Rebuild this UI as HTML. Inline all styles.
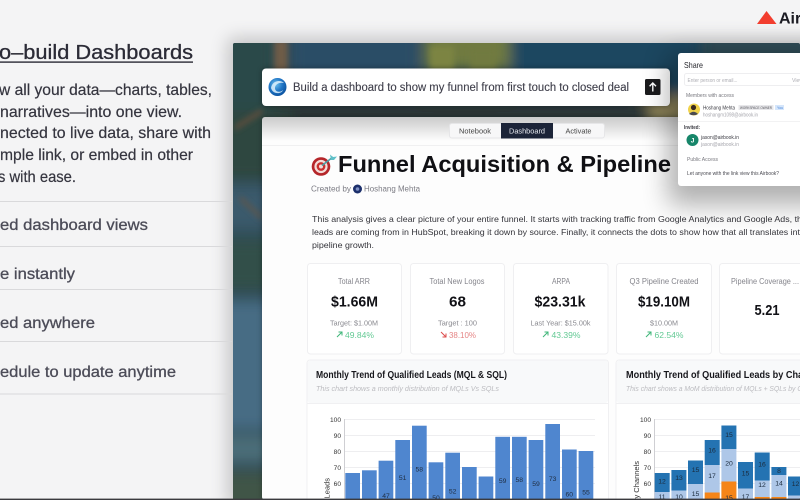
<!DOCTYPE html>
<html lang="en"><head><meta charset="utf-8"><title>Auto-build Dashboards</title>
<style>
html,body{margin:0;padding:0;width:800px;height:500px;overflow:hidden;background:#f4f4f5}
svg{display:block;filter:blur(.3px)}
text{font-family:"Liberation Sans",sans-serif;white-space:pre}
</style></head><body>
<svg width="800" height="500" viewBox="0 0 800 500" xmlns="http://www.w3.org/2000/svg">
<defs>
<filter id="b8" x="-50%" y="-50%" width="200%" height="200%"><feGaussianBlur stdDeviation="7"/></filter>
<filter id="b3" x="-50%" y="-50%" width="200%" height="200%"><feGaussianBlur stdDeviation="3"/></filter>
<filter id="sh" x="-30%" y="-30%" width="160%" height="160%"><feGaussianBlur stdDeviation="9"/></filter>
<filter id="sh3" x="-40%" y="-40%" width="180%" height="180%"><feGaussianBlur stdDeviation="13"/></filter>
<filter id="sh2" x="-30%" y="-30%" width="160%" height="160%"><feGaussianBlur stdDeviation="3"/></filter>
<clipPath id="pan"><rect x="233" y="43" width="567" height="457" rx="2"/></clipPath>
<clipPath id="card"><rect x="262" y="117" width="538" height="383" rx="3"/></clipPath>
<clipPath id="view"><rect x="0" y="0" width="800" height="500"/></clipPath>
<radialGradient id="orb" cx="40%" cy="35%" r="70%"><stop offset="0" stop-color="#6cc0ee"/><stop offset=".55" stop-color="#1f74c4"/><stop offset="1" stop-color="#0a4f9c"/></radialGradient>
<linearGradient id="topsh" x1="0" y1="0" x2="0" y2="1"><stop offset="0" stop-color="#000" stop-opacity=".2"/><stop offset="1" stop-color="#000" stop-opacity="0"/></linearGradient>
</defs>
<g clip-path="url(#view)">
<rect width="800" height="500" fill="#f4f4f5"/>
<!-- panel shadow -->
<rect x="228" y="38" width="600" height="470" fill="#000" opacity=".2" filter="url(#sh)"/>
<rect x="0" y="0" width="208" height="500" fill="#f4f4f5"/>
<rect x="0" y="0" width="800" height="16" fill="#f4f4f5"/>

<!-- left copy -->
<g fill="#2b2b36" stroke="#2b2b36" stroke-width=".3">
<text x="-1" y="59" font-size="20.5" textLength="194" lengthAdjust="spacingAndGlyphs">o–build Dashboards</text>
</g>
<rect x="0" y="61.4" width="193" height="1.4" fill="#2b2b36"/>
<g fill="#35353f" stroke="#35353f" stroke-width=".2" font-size="16">
<text x="-1" y="95" textLength="213" lengthAdjust="spacingAndGlyphs">w all your data—charts, tables,</text>
<text x="0" y="117" textLength="182" lengthAdjust="spacingAndGlyphs">narratives—into one view.</text>
<text x="0" y="138" textLength="211" lengthAdjust="spacingAndGlyphs">nected to live data, share with</text>
<text x="0" y="160" textLength="193" lengthAdjust="spacingAndGlyphs">mple link, or embed in other</text>
<text x="-2" y="182" textLength="78" lengthAdjust="spacingAndGlyphs">s with ease.</text>
</g>
<g fill="#d9d9db">
<rect x="0" y="201" width="232" height="1"/><rect x="0" y="246" width="232" height="1"/><rect x="0" y="289" width="232" height="1"/><rect x="0" y="341" width="232" height="1"/><rect x="0" y="393.5" width="232" height="1"/>
</g>
<g fill="#4c4c58" stroke="#4c4c58" stroke-width=".3" font-size="16">
<text x="0" y="230" textLength="148" lengthAdjust="spacingAndGlyphs">ed dashboard views</text>
<text x="0" y="279" textLength="75" lengthAdjust="spacingAndGlyphs">e instantly</text>
<text x="0" y="328" textLength="95" lengthAdjust="spacingAndGlyphs">ed anywhere</text>
<text x="0" y="377" textLength="176" lengthAdjust="spacingAndGlyphs">edule to update anytime</text>
</g>

<!-- logo -->
<path d="M766.5 11 L776.5 24 L757 24 Z" fill="#f23d2e"/>
<text x="779" y="23.5" font-size="16" font-weight="bold" fill="#1a1a22">Air</text>

<!-- painting -->
<g clip-path="url(#pan)">
<rect x="233" y="43" width="567" height="457" fill="#2f4b55"/>
<g filter="url(#b8)">
<rect x="200" y="20" width="75" height="105" fill="#2c4a48"/>
<rect x="290" y="20" width="130" height="75" fill="#2c4e66"/>
<rect x="425" y="20" width="90" height="50" fill="#6f7a40"/>
<rect x="510" y="20" width="190" height="75" fill="#1d4660"/>
<rect x="640" y="95" width="50" height="30" fill="#8d8358"/>
<rect x="270" y="100" width="380" height="25" fill="#2a3636"/>
<rect x="200" y="110" width="90" height="70" fill="#2e4641"/>
<rect x="200" y="185" width="90" height="45" fill="#3a5a6c"/>
<rect x="200" y="240" width="90" height="50" fill="#33504a"/>
<rect x="200" y="300" width="90" height="130" fill="#466c84"/>
<rect x="200" y="435" width="90" height="28" fill="#4b6d78"/>
<rect x="200" y="472" width="90" height="50" fill="#3f5446"/>
</g>
<g filter="url(#b3)">
<rect x="274" y="40" width="14" height="32" fill="#6e5c46"/>
<rect x="430" y="46" width="24" height="24" fill="#7c8442"/>
<rect x="470" y="48" width="26" height="22" fill="#717a40"/>
<path d="M235 125 L262 108 L262 114 L235 131Z" fill="#5b4e3e"/>
<path d="M240 195 L262 215 L262 221 L240 201Z" fill="#5a5650"/>
</g>
</g>

<!-- main card -->
<rect x="262" y="117" width="538" height="383" rx="3" fill="#000" opacity=".3" filter="url(#sh2)"/>
<g clip-path="url(#card)">
<rect x="262" y="117" width="538" height="383" fill="#fdfdfd"/>
<rect x="262" y="117" width="420" height="24" fill="url(#topsh)"/>
<rect x="262" y="145" width="538" height="1" fill="#f0f0f1"/>
<!-- tabs -->
<rect x="449.5" y="123.5" width="155" height="14.5" rx="2.5" fill="#f7f7f8" stroke="#e6e6e8"/>
<rect x="501" y="123" width="52" height="15.5" fill="#1c2438"/>
<text x="475" y="133.5" font-size="7.6" fill="#444" text-anchor="middle" textLength="32" lengthAdjust="spacingAndGlyphs">Notebook</text>
<text x="527" y="133.5" font-size="7.6" fill="#e9ebf0" text-anchor="middle" textLength="36" lengthAdjust="spacingAndGlyphs">Dashboard</text>
<text x="578.5" y="133.5" font-size="7.6" fill="#444" text-anchor="middle" textLength="26" lengthAdjust="spacingAndGlyphs">Activate</text>

<!-- target emoji -->
<circle cx="321" cy="166.5" r="9.3" fill="#b5262a"/><circle cx="321" cy="166.5" r="6.6" fill="#f3dcd8"/><circle cx="321" cy="166.5" r="4.4" fill="#c9302f"/><circle cx="321" cy="166.5" r="2" fill="#f3dcd8"/>
<path d="M322 165.5 L333 157" stroke="#4aa0a8" stroke-width="1.6"/><path d="M330 154.5 L333 157 L337 156.5 L334 160 L331 160Z" fill="#5fc0c8"/>
<text x="338" y="172" font-size="23.5" font-weight="bold" fill="#101014" textLength="333" lengthAdjust="spacingAndGlyphs">Funnel Acquisition &amp; Pipeline</text>

<text x="311" y="191.5" font-size="8" fill="#7c7c84" textLength="40" lengthAdjust="spacingAndGlyphs">Created by</text>
<circle cx="357.5" cy="189" r="4.5" fill="#1c2f6b"/><circle cx="357.5" cy="189" r="1.8" fill="#7e90c4"/>
<text x="364" y="191.5" font-size="8" fill="#7c7c84" textLength="56" lengthAdjust="spacingAndGlyphs">Hoshang Mehta</text>

<g font-size="8.6" fill="#34343a">
<text x="312" y="222" textLength="490" lengthAdjust="spacingAndGlyphs">This analysis gives a clear picture of your entire funnel. It starts with tracking traffic from Google Analytics and Google Ads, th</text>
<text x="312" y="235" textLength="488" lengthAdjust="spacingAndGlyphs">leads are coming from in HubSpot, breaking it down by source. Finally, it connects the dots to show how that all translates int</text>
<text x="312" y="248" textLength="62" lengthAdjust="spacingAndGlyphs">pipeline growth.</text>
</g>

<!-- KPI cards -->
<g fill="#fff" stroke="#efeff1">
<rect x="307.5" y="263.5" width="94" height="90.5" rx="3"/><rect x="410.5" y="263.5" width="94" height="90.5" rx="3"/><rect x="513.5" y="263.5" width="94.5" height="90.5" rx="3"/><rect x="616.5" y="263.5" width="95" height="90.5" rx="3"/><rect x="719.5" y="263.5" width="95" height="90.5" rx="3"/>
</g>
<g font-size="8" fill="#85858c" text-anchor="middle">
<text x="354" y="284" textLength="32" lengthAdjust="spacingAndGlyphs">Total ARR</text>
<text x="457" y="284" textLength="55" lengthAdjust="spacingAndGlyphs">Total New Logos</text>
<text x="561" y="284" textLength="18" lengthAdjust="spacingAndGlyphs">ARPA</text>
<text x="664" y="284" textLength="69" lengthAdjust="spacingAndGlyphs">Q3 Pipeline Created</text>
<text x="765" y="284" textLength="68" lengthAdjust="spacingAndGlyphs">Pipeline Coverage ...</text>
</g>
<g font-size="15" font-weight="bold" fill="#111116" text-anchor="middle">
<text x="354.5" y="306.5" textLength="47" lengthAdjust="spacingAndGlyphs">$1.66M</text>
<text x="457.5" y="306.5" textLength="17" lengthAdjust="spacingAndGlyphs">68</text>
<text x="560" y="306.5" textLength="51" lengthAdjust="spacingAndGlyphs">$23.31k</text>
<text x="664" y="306.5" textLength="52" lengthAdjust="spacingAndGlyphs">$19.10M</text>
<text x="767" y="315" textLength="25" lengthAdjust="spacingAndGlyphs">5.21</text>
</g>
<g font-size="7.6" fill="#8a8a90" text-anchor="middle">
<text x="354" y="325.5" textLength="48" lengthAdjust="spacingAndGlyphs">Target: $1.00M</text>
<text x="457.5" y="325.5" textLength="39" lengthAdjust="spacingAndGlyphs">Target : 100</text>
<text x="560.5" y="325.5" textLength="60" lengthAdjust="spacingAndGlyphs">Last Year: $15.00k</text>
<text x="664" y="325.5" textLength="28" lengthAdjust="spacingAndGlyphs">$10.00M</text>
</g>
<g font-size="8.5" fill="#62c993">
<text x="345" y="338" textLength="29" lengthAdjust="spacingAndGlyphs">49.84%</text>
<text x="551.5" y="338" textLength="29" lengthAdjust="spacingAndGlyphs">43.39%</text>
<text x="654.5" y="338" textLength="29" lengthAdjust="spacingAndGlyphs">62.54%</text>
</g>
<text x="449" y="338" font-size="8.5" fill="#e58585" textLength="27" lengthAdjust="spacingAndGlyphs">38.10%</text>
<g fill="none" stroke="#3fb678" stroke-width="1">
<path d="M337 337 L342 332 M338.5 332 H342 V335.5"/><path d="M543 337 L548 332 M544.5 332 H548 V335.5"/><path d="M646 337 L651 332 M647.5 332 H651 V335.5"/>
</g>
<path d="M441 332 L446 337 M446 333.5 V337 H442.5" fill="none" stroke="#dc4b4b" stroke-width="1"/>

<!-- chart cards -->
<rect x="307" y="360" width="301.5" height="150" rx="3" fill="#fff" stroke="#f0f0f2"/>
<rect x="307.5" y="360.5" width="300.5" height="42.5" rx="3" fill="#f8f9fa"/>
<rect x="307.5" y="403" width="300.5" height="1" fill="#f0f0f2"/>
<rect x="616" y="360" width="200" height="150" rx="3" fill="#fff" stroke="#f0f0f2"/>
<rect x="616.5" y="360.5" width="200" height="42.5" rx="3" fill="#f8f9fa"/>
<rect x="616.5" y="403" width="200" height="1" fill="#f0f0f2"/>
<text x="316" y="378" font-size="10" font-weight="bold" fill="#17171c" textLength="191" lengthAdjust="spacingAndGlyphs">Monthly Trend of Qualified Leads (MQL &amp; SQL)</text>
<text x="316" y="391" font-size="7.5" font-style="italic" fill="#bcbcc0" textLength="183" lengthAdjust="spacingAndGlyphs">This chart shows a monthly distribution of MQLs Vs SQLs</text>
<text x="626" y="378" font-size="10" font-weight="bold" fill="#17171c" textLength="201" lengthAdjust="spacingAndGlyphs">Monthly Trend of Qualified Leads by Channels</text>
<text x="626" y="391" font-size="7.5" font-style="italic" fill="#bcbcc0" textLength="200" lengthAdjust="spacingAndGlyphs">This chart shows a MoM distribution of MQLs + SQLs by Channels</text>

<!-- left chart -->
<g stroke="#eeeef0"><path d="M344.5 419.5H595M344.5 435.5H595M344.5 451.5H595M344.5 467.5H595M344.5 483.5H595"/></g>
<path d="M344.5 419V500" stroke="#cfcfd3"/>
<g font-size="6.6" fill="#333" text-anchor="end"><text x="341" y="422">100</text><text x="341" y="438">90</text><text x="341" y="454">80</text><text x="341" y="470">70</text><text x="341" y="486">60</text></g>
<text transform="translate(329.5 478) rotate(-90)" font-size="7.5" fill="#333" text-anchor="end">Qualified Leads</text>
<g fill="#4f86cf">
<rect x="345.3" y="473" width="14.7" height="30"/><rect x="362" y="470.3" width="14.7" height="30"/><rect x="378.6" y="460.7" width="14.7" height="40"/><rect x="395.3" y="440" width="14.7" height="60"/><rect x="412" y="425.7" width="14.7" height="75"/><rect x="428.6" y="462.3" width="14.7" height="40"/><rect x="445.3" y="452.7" width="14.7" height="50"/><rect x="462" y="467" width="14.7" height="35"/><rect x="478.6" y="476.5" width="14.7" height="25"/><rect x="495.3" y="436.8" width="14.7" height="65"/><rect x="512" y="436.8" width="14.7" height="65"/><rect x="528.6" y="440" width="14.7" height="60"/><rect x="545.3" y="424" width="14.7" height="80"/><rect x="562" y="449.5" width="14.7" height="55"/><rect x="578.6" y="451" width="14.7" height="55"/>
</g>
<g font-size="6.8" fill="#1f2d40" text-anchor="middle">
<text x="386" y="498">47</text><text x="402.6" y="480">51</text><text x="419.3" y="471.5">58</text><text x="436" y="500">50</text><text x="452.6" y="493.5">52</text><text x="502.6" y="483">59</text><text x="519.3" y="482">58</text><text x="536" y="486">59</text><text x="552.6" y="481">73</text><text x="569.3" y="496.5">60</text><text x="586" y="494.5">55</text>
</g>

<!-- right chart -->
<g stroke="#eeeef0"><path d="M654.5 419.5H800M654.5 435.5H800M654.5 451.5H800M654.5 467.5H800M654.5 483.5H800"/></g>
<path d="M654.5 419V500" stroke="#cfcfd3"/>
<g font-size="6.6" fill="#333" text-anchor="end"><text x="651" y="422">100</text><text x="651" y="438">90</text><text x="651" y="454">80</text><text x="651" y="470">70</text><text x="651" y="486">60</text></g>
<text transform="translate(639 461) rotate(-90)" font-size="7.5" fill="#333" text-anchor="end">Leads by Channels</text>
<!-- light -->
<g fill="#aec7e8">
<rect x="654.7" y="492" width="15" height="10"/><rect x="671.4" y="490.5" width="15" height="12"/><rect x="688" y="484" width="15" height="18"/><rect x="704.7" y="465" width="15" height="37"/><rect x="721.4" y="449" width="15" height="53"/><rect x="738" y="488.5" width="15" height="14"/><rect x="754.7" y="480.5" width="15" height="22"/><rect x="771.4" y="475" width="15" height="27"/><rect x="788" y="495.5" width="15" height="6"/>
</g>
<!-- dark -->
<g fill="#2473b2">
<rect x="654.7" y="473" width="15" height="19"/><rect x="671.4" y="470" width="15" height="20.5"/><rect x="688" y="460.5" width="15" height="23.5"/><rect x="704.7" y="440" width="15" height="25"/><rect x="721.4" y="425.5" width="15" height="23.5"/><rect x="738" y="462" width="15" height="26.5"/><rect x="754.7" y="452.5" width="15" height="28"/><rect x="771.4" y="467" width="15" height="8"/><rect x="788" y="476.5" width="15" height="19"/>
</g>
<!-- orange -->
<g fill="#f58518">
<rect x="704.7" y="492.5" width="15" height="10"/><rect x="721.4" y="481.5" width="15" height="20"/><rect x="754.7" y="497" width="15" height="5"/><rect x="771.4" y="497" width="15" height="5"/>
</g>
<g font-size="6.8" fill="#1a2a3c" text-anchor="middle">
<text x="662" y="483.5">12</text><text x="679" y="480">13</text><text x="695.5" y="472">15</text><text x="712" y="452.5">16</text><text x="729" y="437">15</text><text x="745.5" y="475.5">15</text><text x="762" y="466.5">16</text><text x="779" y="473">8</text><text x="795.5" y="486">12</text>
<text x="662" y="499">11</text><text x="679" y="499">10</text><text x="695.5" y="496">15</text><text x="712" y="478">17</text><text x="729" y="465.5">20</text><text x="745.5" y="499">17</text><text x="762" y="487">12</text><text x="779" y="485.5">14</text><text x="729" y="500">15</text>
</g>
</g>

<!-- prompt bar -->
<rect x="262" y="68.5" width="408" height="37.5" rx="4" fill="#000" opacity=".35" filter="url(#sh2)"/>
<rect x="262" y="68.5" width="408" height="37.5" rx="4" fill="#fff"/>
<circle cx="277.5" cy="87" r="9" fill="url(#orb)"/>
<path d="M271 88 C272 81 280 79 284 83 C280 82 275 84 275 88 C275 92 280 93 283 90 C282 94 273 95 271 88Z" fill="#dff1fb" opacity=".85"/>
<text x="293" y="91" font-size="11.5" fill="#40404c" stroke="#40404c" stroke-width=".12" textLength="336" lengthAdjust="spacingAndGlyphs">Build a dashboard to show my funnel from first touch to closed deal</text>
<rect x="645" y="79" width="15.5" height="16" rx="1.5" fill="#1b1b1d"/>
<path d="M652.8 91.5 V83.2 M649.6 86.2 L652.8 83 L656 86.2" stroke="#fff" stroke-width="1.4" fill="none"/>

<!-- share popup -->
<rect x="668" y="55" width="170" height="150" rx="3" fill="#000" opacity=".3" filter="url(#sh3)"/>
<rect x="678" y="53" width="140" height="133" rx="3" fill="#fff"/>
<text x="684" y="68" font-size="8.5" fill="#26262c" textLength="19" lengthAdjust="spacingAndGlyphs">Share</text>
<rect x="684.5" y="73.5" width="130" height="12" rx="2" fill="#fff" stroke="#eeeef0"/>
<text x="687.5" y="82" font-size="5.2" fill="#aeaeb4" textLength="50" lengthAdjust="spacingAndGlyphs">Enter person or email...</text>
<text x="792" y="82" font-size="5.2" fill="#aeaeb4">View</text>
<text x="686" y="97" font-size="5.4" fill="#77777e" textLength="48" lengthAdjust="spacingAndGlyphs">Members with access</text>
<circle cx="694" cy="109.5" r="6" fill="#f0d24a"/><circle cx="693.5" cy="107.5" r="2.6" fill="#3a2a20"/><path d="M689 114 Q693.5 109.5 698 114 Q693.5 116.5 689 114Z" fill="#4a4a50"/>
<text x="703" y="109.5" font-size="5.4" fill="#3a3a42" textLength="32" lengthAdjust="spacingAndGlyphs">Hoshang Mehta</text>
<rect x="738.5" y="105" width="35" height="5" fill="#e7e7ea"/>
<text x="740" y="109" font-size="3.6" fill="#55555c" textLength="32" lengthAdjust="spacingAndGlyphs">WORKSPACE OWNER</text>
<rect x="775" y="105" width="9" height="5" fill="#d5e6fb"/>
<text x="777" y="109" font-size="3.6" fill="#4c86d8">You</text>
<text x="703" y="116.5" font-size="5.2" fill="#a5a5ac" textLength="55" lengthAdjust="spacingAndGlyphs">hoshangm1098@airbook.in</text>
<rect x="678" y="121" width="122" height=".8" fill="#eeeef0"/>
<text x="684" y="129" font-size="5.4" font-weight="bold" fill="#3a3a42" textLength="16" lengthAdjust="spacingAndGlyphs">Invited:</text>
<circle cx="692.5" cy="140" r="6" fill="#17866a"/>
<text x="692.5" y="142.5" font-size="6.5" font-weight="bold" fill="#fff" text-anchor="middle">J</text>
<text x="701" y="139" font-size="5.4" fill="#3a3a42" textLength="38" lengthAdjust="spacingAndGlyphs">jason@airbook.in</text>
<text x="701" y="146" font-size="5.2" fill="#a5a5ac" textLength="38" lengthAdjust="spacingAndGlyphs">jason@airbook.in</text>
<text x="687" y="161" font-size="5.4" fill="#77777e" textLength="31" lengthAdjust="spacingAndGlyphs">Public Access</text>
<text x="687" y="175" font-size="5.4" fill="#4a4a52" textLength="92" lengthAdjust="spacingAndGlyphs">Let anyone with the link view this Airbook?</text>

<!-- bottom edge -->
<rect x="0" y="498.6" width="800" height="1.4" fill="#3a3a3e"/>
</g>
</svg>
</body></html>
